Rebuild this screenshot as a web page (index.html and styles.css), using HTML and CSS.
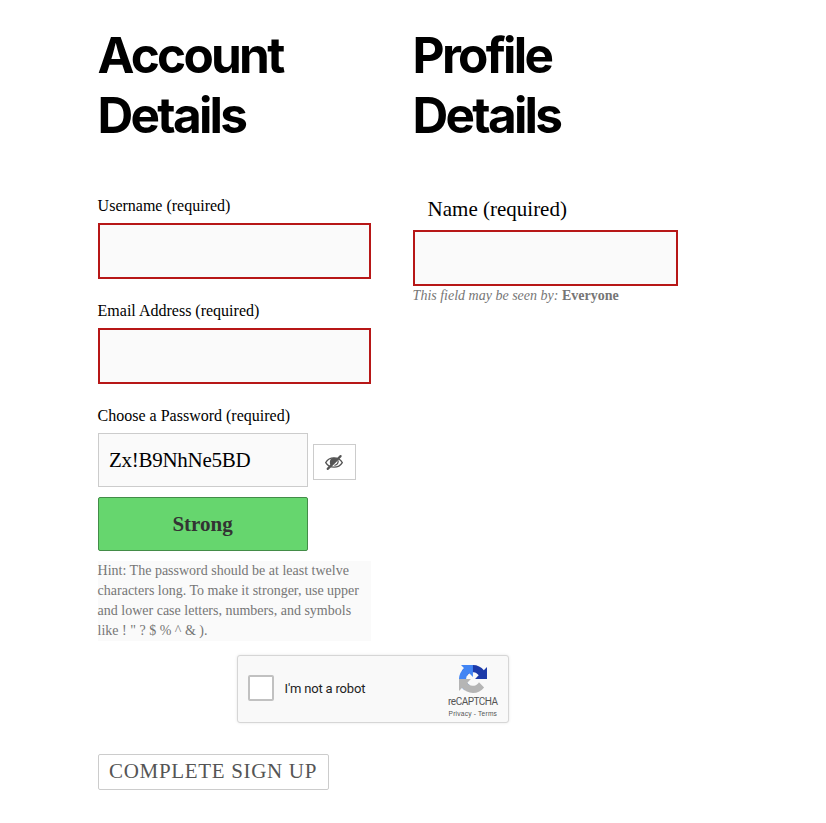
FILE: index.html
```
<!DOCTYPE html>
<html lang="en">
<head>
<meta charset="utf-8">
<title>Sign Up</title>
<link rel="stylesheet" href="styles.css">
</head>
<body>
<form class="signup">
  <div class="columns">
    <section class="account">
      <h2>Account Details</h2>
      <label class="label" for="user">Username (required)</label>
      <input class="field required" id="user" type="text">
      <label class="label" for="email">Email Address (required)</label>
      <input class="field required" id="email" type="text">
      <label class="label" for="pass">Choose a Password (required)</label>
      <div class="password-row">
        <input class="field password" id="pass" type="text" value="Zx!B9NhNe5BD">
        <button class="toggle" type="button" aria-label="Hide password">
          <svg viewBox="0 0 20 20" width="20" height="20">
            <path class="lid" d="M1.700 10.600C3.500 7.500 6.500 5.900 10 5.900s6.500 1.600 8.300 4.700c-1.800 3-4.800 4.600-8.300 4.600S3.500 13.600 1.700 10.600z"/>
            <path class="iris" d="M6.200 8.200C6.600 6.600 8 5.700 10 5.700l3.300.7-6.300 7.200C5.700 12 5.500 10 6.200 8.200z"/>
            <path class="lid" d="M14 8.300c.7 2.600-.8 4.900-3.600 5"/>
            <path class="slash" d="M3.700 16.900L16.600 4.100"/>
          </svg>
        </button>
      </div>
      <div class="strength">Strong</div>
      <p class="hint">Hint: The password should be at least twelve characters long. To make it stronger, use upper and lower case letters, numbers, and symbols like ! " ? $ % ^ &amp; ).</p>
    </section>
    <section class="profile">
      <h2>Profile Details</h2>
      <label class="name-label" for="name">Name (required)</label>
      <input class="field required" id="name" type="text">
      <p class="visibility"><em>This field may be seen by:</em> <strong>Everyone</strong></p>
    </section>
  </div>
  <div class="captcha">
    <span class="check"></span>
    <span class="robot">I'm not a robot</span>
    <div class="brand">
      <svg viewBox="0 0 64 64" width="28" height="28">
        <path fill="#1c3aa9" d="M64 31.955l-.033-1.37V4.687l-7.16 7.16C50.948 4.674 42.033.093 32.05.093c-10.4 0-19.622 4.96-25.458 12.64l11.736 11.86a15.55 15.55 0 0 1 4.754-5.334c2.05-1.6 4.952-2.906 8.968-2.906.485 0 .86.057 1.135.163 4.976.393 9.288 3.14 11.828 7.124l-8.307 8.307L64 31.953"/>
        <path fill="#4285f4" d="M31.862.094l-1.37.033H4.594l7.16 7.16C4.58 13.147 0 22.06 0 32.046c0 10.4 4.96 19.622 12.64 25.458L24.5 45.768a15.55 15.55 0 0 1-5.334-4.754c-1.6-2.05-2.906-4.952-2.906-8.968 0-.485.057-.86.163-1.135.393-4.976 3.14-9.288 7.124-11.828l8.307 8.307L31.86.095"/>
        <path fill="#b5b5b5" d="M.001 32.045l.033 1.37v25.898l7.16-7.16c5.86 7.173 14.774 11.754 24.76 11.754 10.4 0 19.622-4.96 25.458-12.64l-11.736-11.86a15.55 15.55 0 0 1-4.754 5.334c-2.05 1.6-4.952 2.906-8.968 2.906-.485 0-.86-.057-1.135-.163-4.976-.393-9.288-3.14-11.828-7.124l8.307-8.307c-10.522.04-22.4.066-27.295-.005"/>
      </svg>
      <span class="brand-name">reCAPTCHA</span>
      <span class="terms">Privacy - Terms</span>
    </div>
  </div>
  <button class="submit" type="button">COMPLETE SIGN UP</button>
</form>
</body>
</html>
```
FILE: styles.css
```
* { box-sizing: border-box; }
body { margin: 0; background: #fff; color: #000; font-family: "Liberation Serif", serif; }
.signup { padding: 25px 148px 0 97.6px; }
.columns { display: grid; grid-template-columns: 273px 265px; column-gap: 42px; }
h2 { margin: 0 0 52px; width: 200px; font: 650 49.5px/60px Inter, sans-serif; letter-spacing: -2.75px; }
.label { display: block; font-size: 16px; line-height: 18px; margin-bottom: 8px; }
.field { display: block; width: 100%; height: 56px; margin: 0 0 23px; padding: 0 10px; border: 1px solid #ccc; border-radius: 0; background: #fafafa; color: #000; font: 21px "Liberation Serif", serif; outline: 0; }
.field.required { border: 2px solid #b71717; }
.password-row { display: flex; align-items: flex-start; gap: 5px; margin-bottom: 10px; }
.field.password { width: 210px; height: 54px; margin: 0; padding-left: 10.4px; letter-spacing: -.27px; }
.toggle { display: flex; align-items: center; justify-content: center; width: 43px; height: 36px; margin-top: 11px; padding: 0; border: 1px solid #ccc; background: #fff; }
.lid { fill: none; stroke: #555; stroke-width: 1.3; }
.iris { fill: #555; }
.slash { stroke: #555; stroke-width: 2.2; stroke-linecap: round; }
.strength { width: 210px; height: 54px; border: 1px solid #438c48; border-radius: 2px; background: #66d66e; color: #333; font-weight: 700; font-size: 21px; line-height: 52px; text-align: center; }
.hint { margin: 10px 0 0; background: #fafafa; color: #767676; font-size: 14px; line-height: 20px; }
.name-label { display: block; margin: -1px 0 8px 15px; font-size: 21px; line-height: 26px; }
.profile .field { margin-bottom: 0; }
.visibility { margin: 0; color: #767676; font-size: 14px; line-height: 20px; }
.captcha { display: flex; align-items: center; width: 272px; height: 68px; margin: 14px 0 0 139px; padding: 0 10px 0 11px; border: 1px solid #d6d6d6; border-radius: 3px; background: #f9f9f9; box-shadow: 0 0 3px rgba(0,0,0,.1); font-family: Roboto, sans-serif; }
.check { width: 26px; height: 26px; margin: -3px 0 0 -1px; border: 2px solid #c1c1c1; border-radius: 2px; background: #fff; }
.robot { margin: -1px 0 0 11px; color: #222; font-size: 13px; letter-spacing: -.18px; white-space: nowrap; }
.brand { display: flex; flex-direction: column; align-items: center; margin: 5px 0 0 auto; color: #555; white-space: nowrap; }
.brand-name { margin-top: 3px; font-size: 10px; letter-spacing: -.5px; line-height: 12px; }
.terms { margin-top: 1px; font: 6.6px/9px "Liberation Sans", sans-serif; letter-spacing: .22px; }
.submit { display: block; height: 36px; margin-top: 31px; padding: 0 10.500px 2px; border: 1px solid #ccc; border-radius: 2px; background: #fff; color: #555; font: 21px "Liberation Serif", serif; letter-spacing: .67px; }
```
